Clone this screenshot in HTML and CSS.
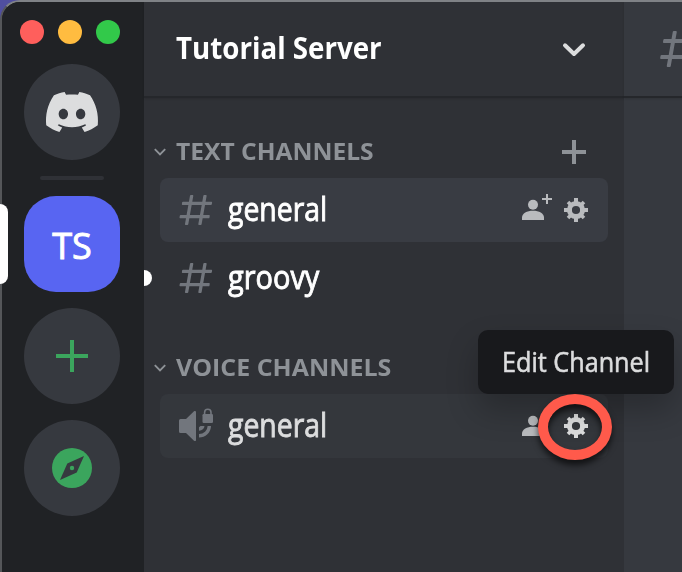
FILE: index.html
```html
<!DOCTYPE html>
<html lang="en">
<head>
<meta charset="utf-8">
<title>Tutorial Server</title>
<link rel="stylesheet" href="styles.css">
</head>
<body>
<svg class="defs" width="0" height="0">
  <symbol id="hash" viewBox="0 0 24 24"><path fill="currentColor" fill-rule="evenodd" d="M5.88657 21C5.57547 21 5.3399 20.7189 5.39427 20.4126L6.00001 17H2.59511C2.28449 17 2.04905 16.7198 2.10259 16.4138L2.27759 15.4138C2.31946 15.1746 2.52722 15 2.77011 15H6.35001L7.41001 9H4.00511C3.69449 9 3.45905 8.71977 3.51259 8.41381L3.68759 7.41381C3.72946 7.17456 3.93722 7 4.18011 7H7.76001L8.39677 3.41262C8.43914 3.17391 8.64664 3 8.88907 3H9.87344C10.1845 3 10.4201 3.28107 10.3657 3.58738L9.76001 7H15.76L16.3968 3.41262C16.4391 3.17391 16.6466 3 16.8891 3H17.8734C18.1845 3 18.4201 3.28107 18.3657 3.58738L17.76 7H21.1649C21.4755 7 21.711 7.28023 21.6574 7.58619L21.4824 8.58619C21.4406 8.82544 21.2328 9 20.9899 9H17.41L16.35 15H19.7549C20.0655 15 20.301 15.2802 20.2474 15.5862L20.0724 16.5862C20.0306 16.8254 19.8228 17 19.5799 17H16L15.3632 20.5874C15.3209 20.8261 15.1134 21 14.8709 21H13.8866C13.5755 21 13.3399 20.7189 13.3943 20.4126L14 17H8.00001L7.36325 20.5874C7.32088 20.8261 7.11337 21 6.87094 21H5.88657ZM9.41045 9L8.35045 15H14.3504L15.4104 9H9.41045Z"/></symbol>
  <symbol id="gear" viewBox="-16 -16 32 32"><g fill="none" stroke="currentColor"><circle r="6.6" stroke-width="5"/><path stroke-width="4" d="M0-12v5M0 12v-5M-12 0h5M12 0h-5"/><path stroke-width="3.6" d="M-8-8l3 3M8 8l-3-3M8-8l-3 3M-8 8l3-3"/></g></symbol>
  <symbol id="invite" viewBox="0 0 32 32"><g fill="currentColor"><circle cx="13" cy="10.8" r="5"/><path d="M2 26v-2.4C2 19.3 7 16.8 13 16.8s11 2.500 11 6.800V26z"/><path d="M26 0h2v4h4v2h-4v4h-2V6h-4V4h4z"/></g></symbol>
  <symbol id="chev" viewBox="0 0 12 8"><path fill="none" stroke="currentColor" stroke-width="1.9" d="M.8 1.100L6 6.300l5.200-5.200"/></symbol>
</svg>
<div class="window">
  <nav class="rail">
    <div class="lights"><i class="red"></i><i class="yellow"></i><i class="green"></i></div>
    <div class="server"><svg width="56" height="40" viewBox="0 0 28 20"><path fill="#dcddde" d="M23.0212 1.67671C21.3107 0.879656 19.5079 0.318797 17.6584 0C17.4062 0.461742 17.1749 0.934541 16.9708 1.4184C15.003 1.12145 12.9974 1.12145 11.0283 1.4184C10.819 0.934541 10.589 0.461744 10.3368 0.00546311C8.48074 0.324393 6.67795 0.885118 4.96746 1.68231C1.56727 6.77853 0.649666 11.7538 1.11108 16.652C3.10102 18.1418 5.3262 19.2743 7.69177 20C8.22338 19.2743 8.69519 18.4993 9.09812 17.691C8.32996 17.3997 7.58522 17.0424 6.87684 16.6135C7.06531 16.4762 7.24726 16.3387 7.42403 16.1847C11.5911 18.1749 16.408 18.1749 20.5763 16.1847C20.7531 16.3332 20.9351 16.4762 21.1171 16.6135C20.41 17.0369 19.6639 17.3997 18.897 17.691C19.3052 18.4993 19.7718 19.2689 20.3021 19.9945C22.6677 19.2689 24.8929 18.1364 26.8828 16.6466H26.8893C27.43 10.9731 25.9665 6.04728 23.0212 1.67671ZM9.68041 13.6383C8.39754 13.6383 7.34085 12.4453 7.34085 10.994C7.34085 9.54272 8.37155 8.34973 9.68041 8.34973C10.9893 8.34973 12.0395 9.54272 12.0187 10.994C12.0187 12.4453 10.9828 13.6383 9.68041 13.6383ZM18.3161 13.6383C17.0332 13.6383 15.9765 12.4453 15.9765 10.994C15.9765 9.54272 17.0124 8.34973 18.3161 8.34973C19.6184 8.34973 20.6751 9.54272 20.6543 10.994C20.6543 12.4453 19.6184 13.6383 18.3161 13.6383Z"/></svg></div>
    <div class="separator"></div>
    <div class="server active"><span class="initials">TS</span></div>
    <div class="server"><svg width="32" height="32" viewBox="0 0 32 32"><path stroke="#3ba55d" stroke-width="4" d="M16 0v32M0 16h32"/></svg></div>
    <div class="server"><svg width="40" height="40" viewBox="0 0 40 40"><circle cx="20" cy="20" r="20" fill="#3ba55d"/><path fill="#36393f" d="M32 8L24.700 24.500 8 32l7.300-16.500z"/><circle cx="20" cy="20" r="2.200" fill="#3ba55d"/></svg></div>
  </nav>
  <aside class="channels">
    <header class="bar"><h1 class="t title">Tutorial Server</h1><svg class="menu" width="24" height="16" viewBox="0 0 24 16"><path fill="none" stroke="#dcddde" stroke-width="4" stroke-linecap="round" stroke-linejoin="round" d="M3 3.300l9 8.700 9-8.700"/></svg></header>
    <div class="category"><svg class="chev"><use href="#chev"/></svg><span class="t cat-text">TEXT CHANNELS</span><svg class="add" width="24" height="24" viewBox="0 0 24 24"><path stroke="#8e9297" stroke-width="4" d="M12 0v24M0 12h24"/></svg></div>
    <div class="channel selected"><svg class="type"><use href="#hash"/></svg><span class="t name general">general</span><svg class="act"><use href="#invite"/></svg><svg class="act gear"><use href="#gear"/></svg></div>
    <div class="channel"><svg class="type"><use href="#hash"/></svg><span class="t name groovy">groovy</span><i class="unread"></i></div>
    <div class="category second"><svg class="chev"><use href="#chev"/></svg><span class="t cat-voice">VOICE CHANNELS</span></div>
    <div class="channel hover"><svg class="type" viewBox="0 0 40 40"><g fill="#72767d"><path d="M4.500 13H10l8-7.700c.8-.8 2-.4 2 .8v27.800c0 1.200-1.200 1.600-2 .8L10 27H4.500Q3 27 3 25.500v-11Q3 13 4.500 13z"/><rect x="26.500" y="8" width="10.500" height="9" rx="1.200"/></g><g fill="none" stroke="#72767d"><path stroke-width="1.600" d="M28.600 9V6.500a3.200 3.200 0 0 1 6.400 0V9"/><path stroke-width="3.400" d="M23 29.800C28.500 29.800 33.300 25.500 33.300 20"/></g><path fill="#72767d" d="M23 24.700V21.200L24.500 20H28.400C28.400 22.500 26 24.700 23 24.700z"/></svg><span class="t name general">general</span><svg class="act"><use href="#invite"/></svg><svg class="act gear"><use href="#gear"/></svg></div>
  </aside>
  <main class="chat"><header class="bar"><svg class="chat-hash" width="48" height="48"><use href="#hash"/></svg></header></main>
</div>
<div class="tooltip"><span class="t tip-text">Edit Channel</span></div>
<div class="ring"></div>
<div class="pill"></div>
</body>
</html>
```
FILE: styles.css
```css
* { box-sizing: border-box; }
body { margin: 0; width: 682px; height: 572px; overflow: hidden; position: relative; background: #504fa0; font-family: "Open Sans", "Noto Sans", sans-serif; }
svg { display: block; flex: none; }
.defs { position: absolute; }
.window { display: flex; height: 572px; width: 700px; border-top: 2px solid #7f8286; border-left: 2px solid #55575a; border-radius: 20px 0 0 0; overflow: hidden; background: #202225; }
.rail { width: 142px; flex: none; background: #202225; display: flex; flex-direction: column; align-items: center; gap: 16px; padding: 18px 2px 0 0; }
.lights { display: flex; gap: 14px; height: 28px; margin-right: 4px; }
.lights i { width: 24px; height: 24px; border-radius: 50%; }
.red { background: #ff5f5c; }
.yellow { background: #ffbc40; }
.green { background: #32c94a; }
.server { width: 96px; height: 96px; flex: none; border-radius: 50%; background: #36393f; display: flex; align-items: center; justify-content: center; }
.server.active { border-radius: 32px; background: #5865f2; }
.separator { width: 64px; height: 4px; flex: none; border-radius: 2px; background: #2f3136; }
.t { display: block; white-space: nowrap; transform-origin: 0 50%; flex: none; }
.initials { color: #fff; font-size: 36px; line-height: 48px; padding-top: 3px; -webkit-text-stroke: .9px currentColor; }
.channels { width: 480px; flex: none; background: #2f3136; }
.bar { height: 96px; display: flex; align-items: center; border-bottom: 2px solid #25272b; box-shadow: 0 1px 2px rgba(0,0,0,.12); }
.channels .bar { justify-content: space-between; padding: 0 38px 2px 32px; }
.title { margin: 0; color: #fff; font-size: 30px; font-weight: 700; line-height: 40px; transform: scaleX(.923); }
.menu { margin-top: 4px; }
.category { display: flex; align-items: center; height: 48px; margin-top: 30px; padding: 0 38px 0 10px; color: #8e9297; font-size: 24px; font-weight: 700; line-height: 32px; }
.category.second { margin-top: 34px; }
.chev { width: 12px; height: 8px; margin-right: 10px; }
.add { margin-left: auto; }
.cat-text, .cat-voice { padding-bottom: 2px; }
.cat-text { transform: scaleX(1.024); }
.cat-voice { transform: scaleX(1.04); }
.channel { position: relative; display: flex; align-items: center; height: 64px; margin: 0 16px 4px; padding: 0 16px; border-radius: 8px; color: #fff; }
.category + .channel { margin-top: 2px; }
.selected { background: #393c43; }
.hover { background: #34373c; color: #dcddde; }
.type { width: 40px; height: 40px; color: #72767d; margin-right: 12px; }
.name { font-size: 32px; line-height: 44px; padding-bottom: 2px; width: 280px; transform: scaleX(.887); margin-right: 12px; -webkit-text-stroke: .9px currentColor; }
.groovy { transform: scaleX(.905); }
.act { width: 32px; height: 32px; color: #b9bbbe; }
.gear { margin-left: 8px; }
.hover .gear { color: #dcddde; }
.unread { position: absolute; left: -16px; top: 24px; width: 8px; height: 16px; border-radius: 0 8px 8px 0; background: #fff; }
.chat { flex: 1; background: #36393f; }
.chat .bar { padding: 0 0 0 32px; }
.chat-hash { color: #72767d; }
.tooltip { position: absolute; left: 478px; top: 330px; width: 196px; height: 64px; padding: 0 24px 2px; display: flex; align-items: center; border-radius: 10px; background: #18191c; color: #dcddde; box-shadow: 0 16px 32px rgba(0,0,0,.24); font-size: 28px; }
.tip-text { transform: scaleX(.9); -webkit-text-stroke: .6px currentColor; }
.ring { position: absolute; left: 538px; top: 394px; width: 74px; height: 66px; border: 10px solid #ff5a4b; border-radius: 50%; filter: drop-shadow(0 5px 3px rgba(0,0,0,.65)); }
.pill { position: absolute; left: 0; top: 204px; width: 8px; height: 80px; border-radius: 0 8px 8px 0; background: #fff; }
```
